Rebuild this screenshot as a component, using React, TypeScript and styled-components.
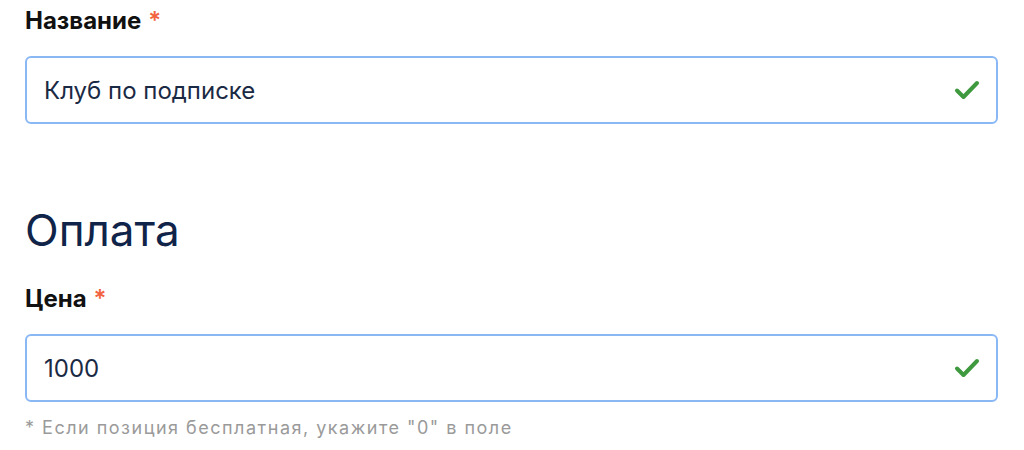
import React from "react";
import styled, { createGlobalStyle } from "styled-components";

const Global = createGlobalStyle`
  html, body { margin: 0; padding: 0; background: #ffffff; }
  body { font-family: Inter, "Noto Sans", sans-serif; -webkit-font-smoothing: antialiased; }
`;

const Page = styled.div`
  display: flex;
  flex-direction: column;
  padding: 7px 26px 0 25px;
`;

const Field = styled.div<{ $mt?: number }>`
  display: flex;
  flex-direction: column;
  margin-top: ${(p) => p.$mt ?? 0}px;
`;

const Label = styled.label`
  font-size: 24px;
  line-height: 28px;
  font-weight: 700;
  color: #111111;
  margin-bottom: 21px;
`;

const Star = styled.span`
  color: #f2643f;
  margin-left: 7px;
  font-weight: 600;
`;

const InputBox = styled.div`
  display: flex;
  align-items: center;
  height: 68px;
  box-sizing: border-box;
  border: 2px solid #8ab8f5;
  border-radius: 6px;
  padding: 0 16px 0 17px;
`;

const InputText = styled.div`
  flex: 1;
  font-size: 24px;
  color: #1b2a44;
`;

const Heading = styled.h2`
  margin: 80px 0 0;
  font-size: 44px;
  line-height: 52px;
  font-weight: 400;
  color: #102449;
`;

const Hint = styled.div`
  margin-top: 16px;
  font-size: 18px;
  line-height: 20px;
  letter-spacing: 1.5px;
  color: #9a9a9a;
`;

const Check = () => (
  <svg width="26" height="22" viewBox="0 0 26 22" fill="none">
    <path d="M3 11.5 L9.5 18 L23 4" stroke="#3f9a3f" strokeWidth="4" strokeLinecap="round" strokeLinejoin="round" />
  </svg>
);

export default function App() {
  return (
    <Page>
      <Global />
      <Field>
        <Label>
          Название<Star>*</Star>
        </Label>
        <InputBox>
          <InputText>Клуб по подписке</InputText>
          <Check />
        </InputBox>
      </Field>
      <Heading>Оплата</Heading>
      <Field $mt={29}>
        <Label>
          Цена<Star>*</Star>
        </Label>
        <InputBox>
          <InputText>1000</InputText>
          <Check />
        </InputBox>
        <Hint>* Если позиция бесплатная, укажите "0" в поле</Hint>
      </Field>
    </Page>
  );
}
